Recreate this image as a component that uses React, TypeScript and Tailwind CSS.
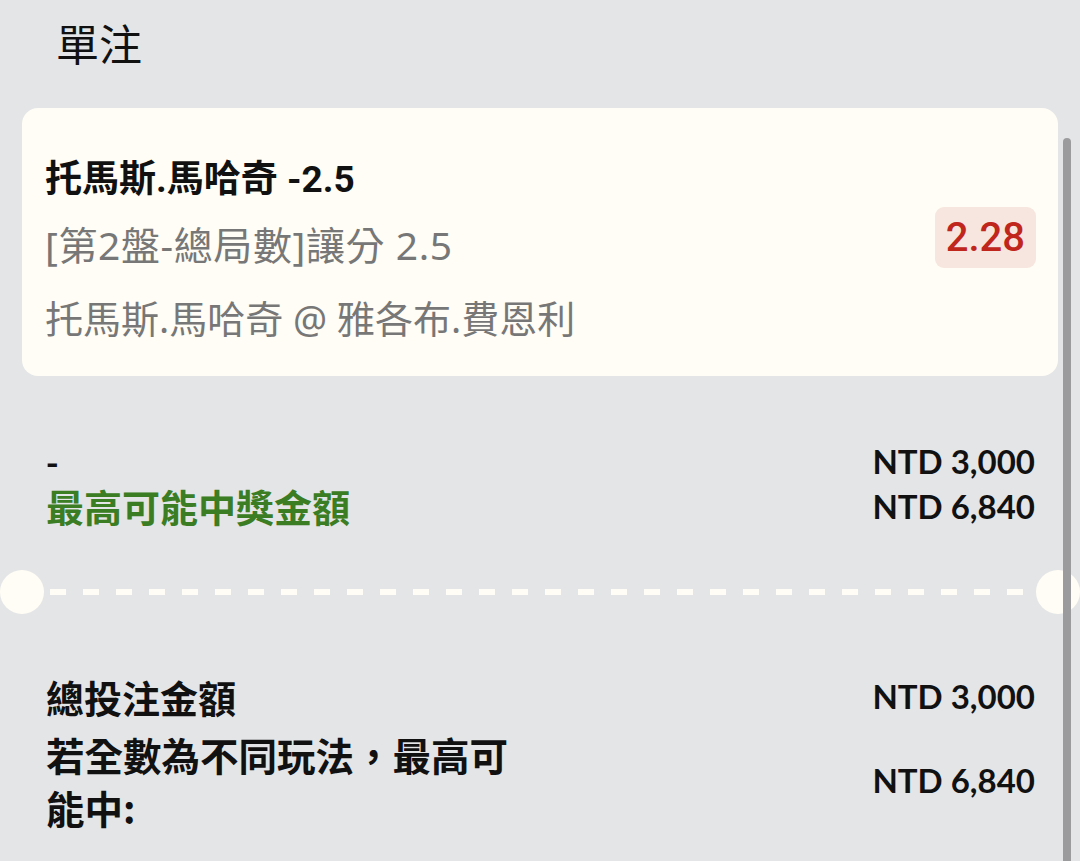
import React from "react";

const cjk = "font-['Noto_Sans_CJK_TC','Noto_Sans',sans-serif]";
const card = "font-['Roboto','Noto_Sans_CJK_TC',sans-serif]";
const sub = "font-['Noto_Sans','Noto_Sans_CJK_TC',sans-serif]";
const num = "font-['Lato','Noto_Sans_CJK_TC',sans-serif]";

export default function App() {
  return (
    <div className="relative w-[1080px] h-[861px] overflow-hidden bg-[#e4e5e7]">
      {/* header */}
      <div className={`${cjk} pl-[56px] pt-[12px] text-[43px] leading-[60px] text-[#111]`}>單注</div>

      {/* selection card */}
      <div className="mx-[22px] mt-[36px] flex items-start rounded-[16px] bg-[#fffdf5] pl-[23px] pr-[22px] pt-[46px] pb-[32px]">
        <div className="flex-1 flex flex-col">
          <span className={`${card} text-[37px] leading-[52px] font-bold text-[#111]`}>托馬斯.馬哈奇 -2.5</span>
          <span className={`${sub} mt-[13px] text-[39px] leading-[52px] tracking-[0.6px] text-[#777]`}>[第2盤-總局數]讓分 2.5</span>
          <span className={`${sub} mt-[21px] text-[38px] leading-[52px] text-[#777]`}>托馬斯.馬哈奇 @ 雅各布.費恩利</span>
        </div>
        <div className="mt-[53px] flex h-[61px] items-center rounded-[9px] bg-[#f6e6df] px-[11px] font-['Roboto',sans-serif] text-[40px] leading-none font-medium text-[#c0261c]">
          2.28
        </div>
      </div>

      {/* stake */}
      <div className="mt-[63px] flex flex-col pl-[46px] pr-[45px]">
        <div className="flex h-[44px] items-center justify-between">
          <span className={`${cjk} text-[34px] leading-[40px] font-bold text-[#111]`}>-</span>
          <span className={`${num} text-[33px] leading-[40px] font-bold text-[#111]`}>NTD 3,000</span>
        </div>
        <div className="mt-[1px] flex h-[44px] items-center justify-between">
          <span className={`${cjk} text-[38px] leading-[44px] font-bold text-[#3b7d23]`}>最高可能中獎金額</span>
          <span className={`${num} text-[33px] leading-[40px] font-bold text-[#111]`}>NTD 6,840</span>
        </div>
      </div>

      {/* ticket divider */}
      <div className="mt-[42px] flex h-[44px] items-center">
        <div className="h-[44px] w-[44px] shrink-0 rounded-full bg-[#fffdf5]" />
        <div className="mx-[6px] h-[6px] flex-1 bg-[repeating-linear-gradient(90deg,#fffdf5_0_16px,transparent_16px_33px)]" />
        <div className="h-[44px] w-[44px] shrink-0 rounded-full bg-[#fffdf5]" />
      </div>

      {/* totals */}
      <div className="mt-[56px] flex flex-col gap-[5px] pl-[46px] pr-[45px]">
        <div className="flex items-center justify-between">
          <span className={`${cjk} text-[38px] leading-[53px] font-bold text-[#111]`}>總投注金額</span>
          <span className={`${num} text-[33px] font-bold text-[#111]`}>NTD 3,000</span>
        </div>
        <div className="flex items-center justify-between">
          <span className={`${cjk} w-[480px] text-[38.5px] leading-[53px] font-bold text-[#111]`}>
            若全數為不同玩法，最高可能中:
          </span>
          <span className={`${num} text-[33px] font-bold text-[#111]`}>NTD 6,840</span>
        </div>
      </div>

      {/* scroll indicator */}
      <div className="absolute left-[1063px] top-[138px] h-[760px] w-[8px] rounded-full bg-[#9b9b9d]" />
    </div>
  );
}
